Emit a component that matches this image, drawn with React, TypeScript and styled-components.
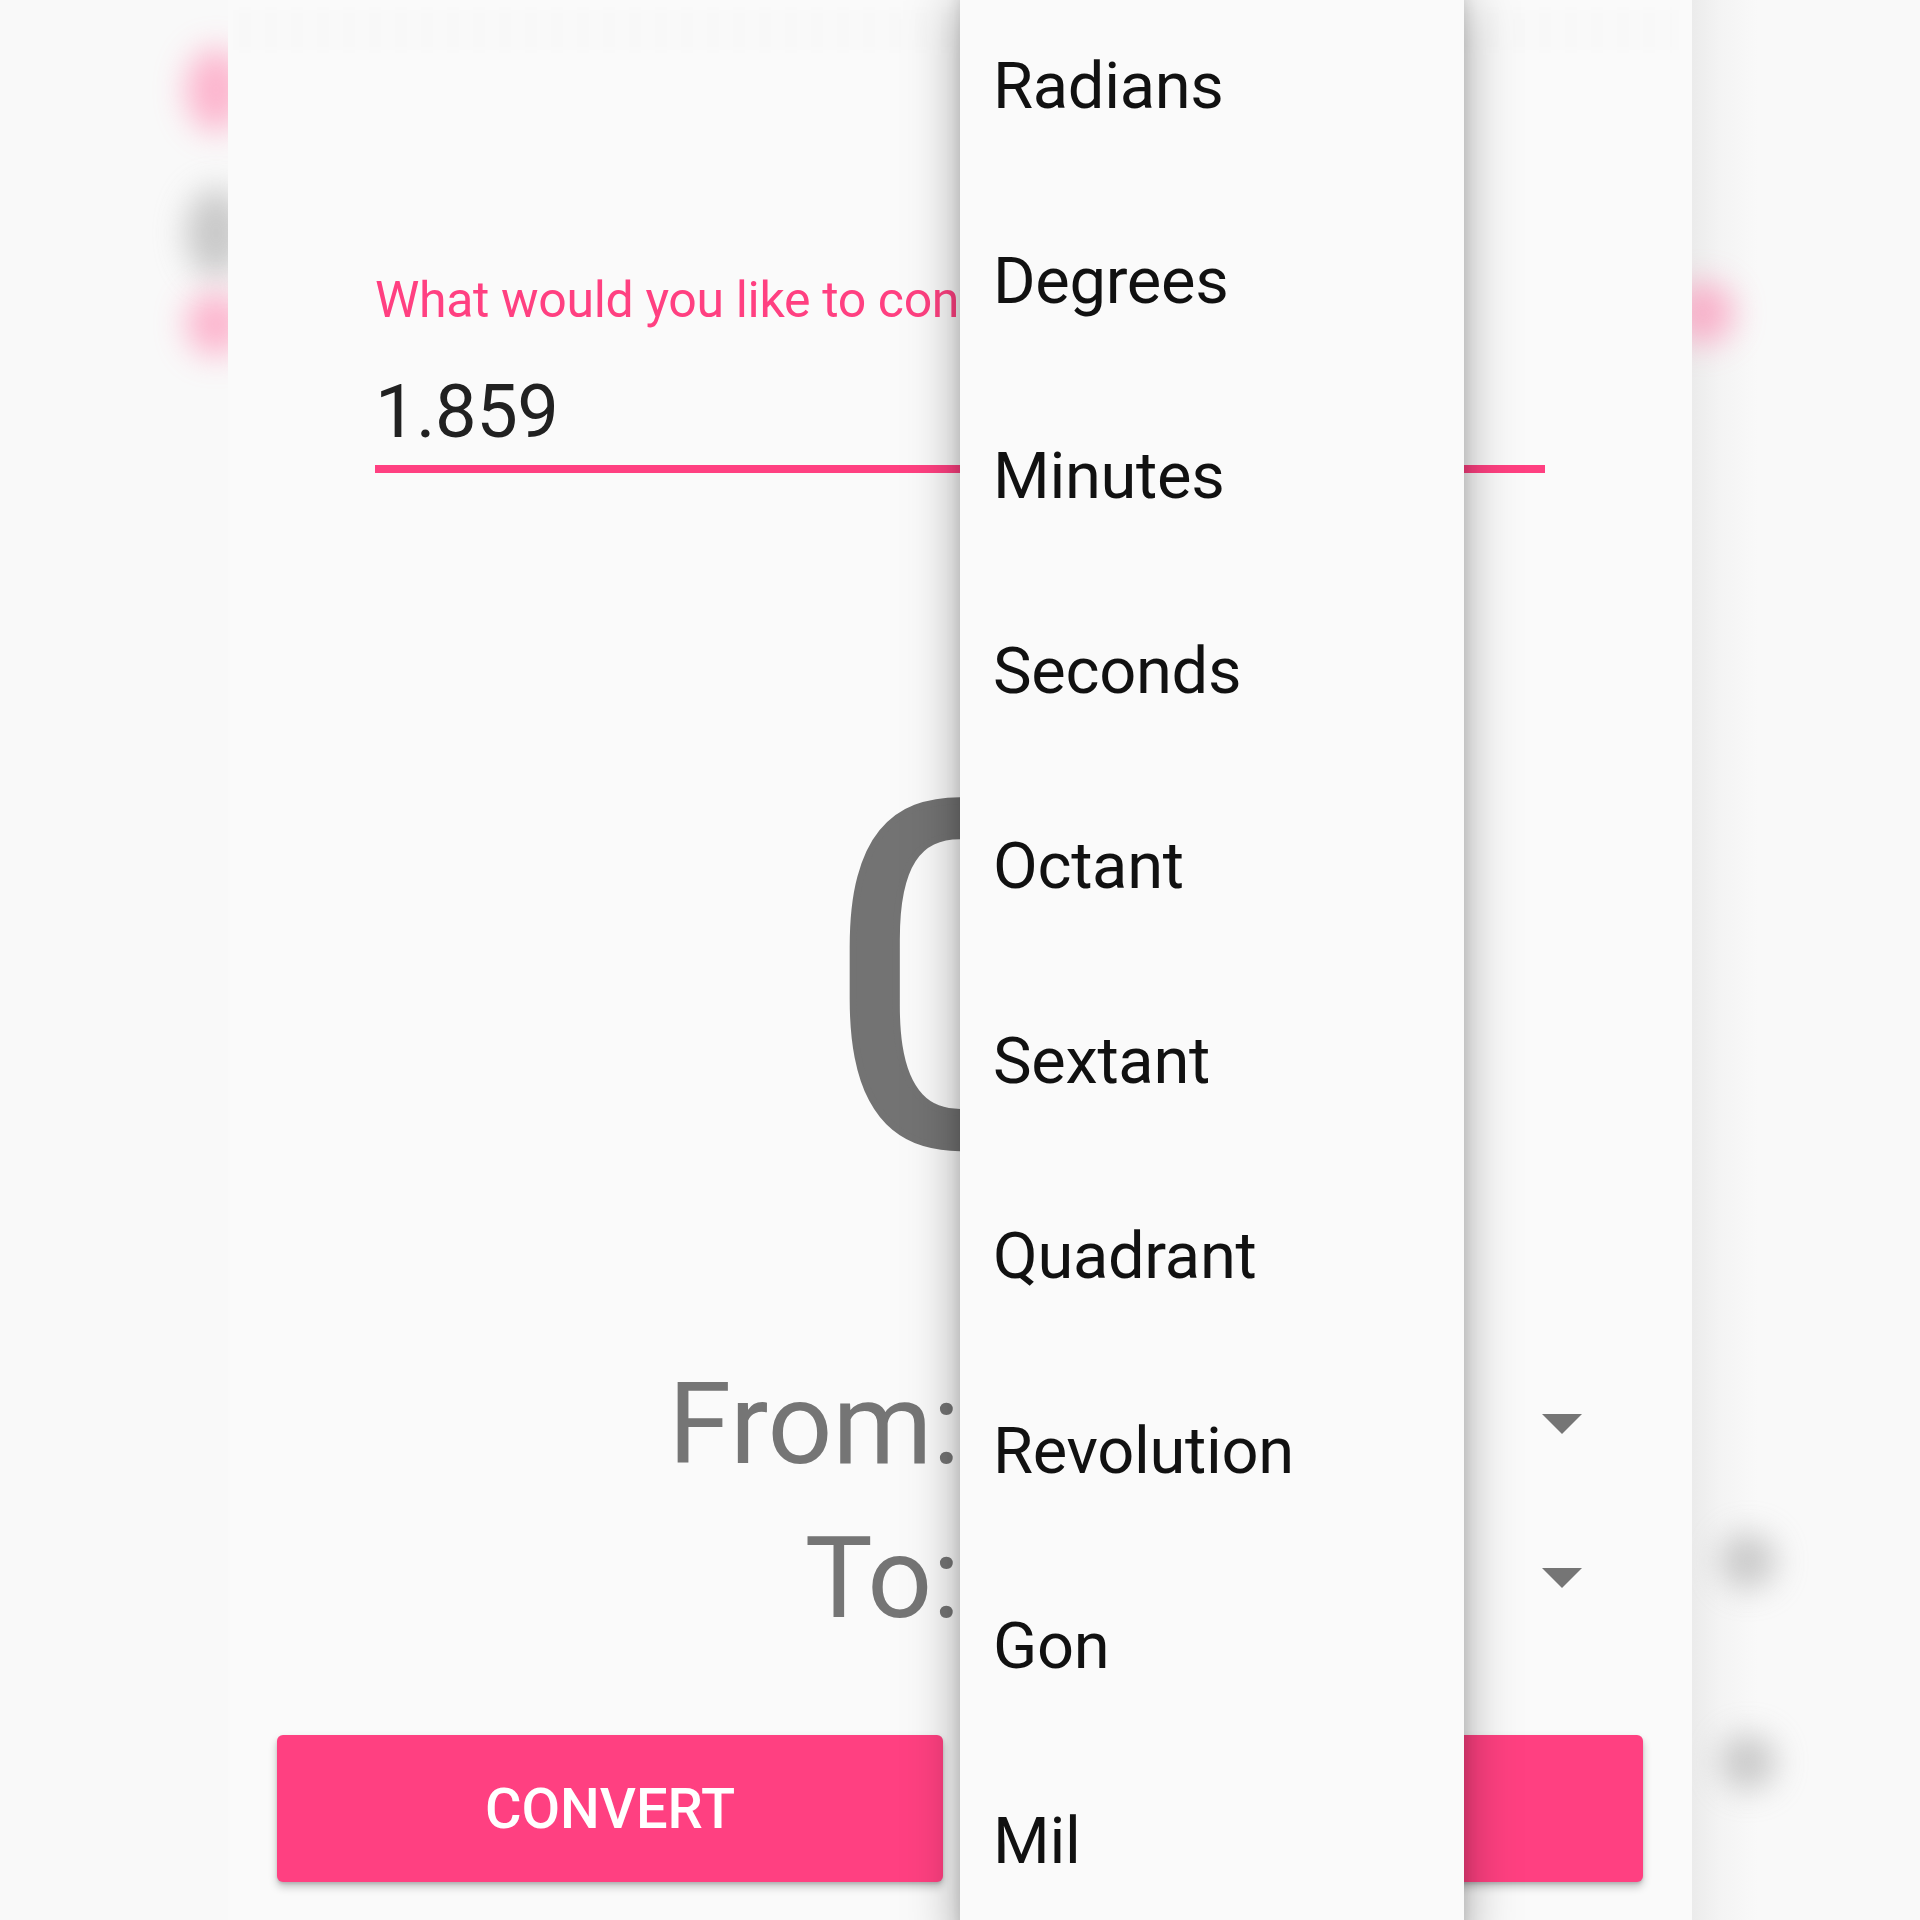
import React from "react";
import styled, { createGlobalStyle } from "styled-components";

const GlobalStyle = createGlobalStyle`
  html, body {
    margin: 0;
    padding: 0;
    background: #f9f9f9;
  }
  body {
    font-family: Roboto, "Noto Sans", "Liberation Sans", sans-serif;
  }
  * { box-sizing: border-box; }
`;

const Stage = styled.div`
  display: flex;
  width: 1920px;
  height: 1920px;
  overflow: hidden;
  background: #f9f9f9;
`;

const Gutter = styled.div<{ $side: "left" | "right" }>`
  width: 228px;
  flex: none;
  display: flex;
  flex-direction: column;
  overflow: hidden;
  padding-left: ${(p) => (p.$side === "left" ? "186px" : "0")};
  background: ${(p) =>
    p.$side === "right"
      ? "linear-gradient(to right, #ebebeb 0px, #f4f4f4 30px, #f9f9f9 66px)"
      : "#f9f9f9"};
`;

const Blob = styled.div<{ $tone: "pink" | "gray"; $w: number; $h: number; $top: number; $left?: number }>`
  flex: none;
  width: ${(p) => p.$w}px;
  height: ${(p) => p.$h}px;
  margin-top: ${(p) => p.$top}px;
  margin-left: ${(p) => p.$left ?? 0}px;
  border-radius: 50%;
  background: ${(p) => (p.$tone === "pink" ? "#ff86b0" : "#a8a8a8")};
  opacity: 0.6;
  filter: blur(16px);
`;

const Screen = styled.div`
  position: relative;
  width: 1464px;
  flex: none;
  display: flex;
  flex-direction: column;
  background: #fafafa;
`;

const GhostBar = styled.div`
  height: 60px;
  flex: none;
  display: flex;
  align-items: center;
  padding: 0 16px 0 8px;
`;

const GhostText = styled.div`
  height: 40px;
  width: 100%;
  background: repeating-linear-gradient(
    to right,
    rgba(0, 0, 0, 0.008) 0px,
    rgba(0, 0, 0, 0.008) 18px,
    rgba(0, 0, 0, 0) 18px,
    rgba(0, 0, 0, 0) 26px
  );
  filter: blur(4px);
`;

const Field = styled.div`
  margin-top: 215px;
  padding: 0 147px;
  display: flex;
  flex-direction: column;
`;

const FieldLabel = styled.div`
  font-size: 50px;
  line-height: 50px;
  height: 50px;
  letter-spacing: -0.35px;
  color: #ff4081;
  white-space: nowrap;
`;

const FieldValue = styled.div`
  margin-top: 49px;
  font-size: 74px;
  line-height: 75px;
  height: 75px;
  letter-spacing: -0.5px;
  color: #212121;
`;

const FieldLine = styled.div`
  margin-top: 16px;
  height: 8px;
  background: #ff4081;
`;

const Result = styled.div`
  margin-top: 258px;
  font-size: 475px;
  line-height: 500px;
  height: 500px;
  text-align: center;
  color: #737373;
  -webkit-text-stroke: 7px #737373;
`;

const Rows = styled.div`
  margin-top: 116px;
  display: flex;
  flex-direction: column;
`;

const SpinnerRow = styled.div`
  height: 154px;
  display: grid;
  grid-template-columns: 732px 732px;
  align-items: center;
`;

const RowLabel = styled.div`
  font-size: 114px;
  line-height: 154px;
  text-align: right;
  color: #757575;
`;

const Spinner = styled.div`
  height: 100%;
  display: flex;
  align-items: center;
  justify-content: flex-end;
  padding-right: 110px;
`;

const Caret = styled.span`
  width: 0;
  height: 0;
  border-left: 20px solid transparent;
  border-right: 20px solid transparent;
  border-top: 20px solid #757575;
`;

const ButtonRow = styled.div`
  margin-top: 80px;
  padding: 0 49px;
  display: flex;
  gap: 34px;
`;

const Button = styled.button`
  flex: 1;
  height: 147px;
  border: none;
  border-radius: 6px;
  background: #ff4081;
  color: #ffffff;
  font-family: Roboto, "Noto Sans", sans-serif;
  font-size: 56px;
  font-weight: 500;
  box-shadow: 0 5px 9px rgba(0, 0, 0, 0.22), 0 2px 3px rgba(0, 0, 0, 0.12);
  padding: 0;
`;

const Menu = styled.ul`
  position: absolute;
  top: -11px;
  left: 732px;
  width: 504px;
  margin: 0;
  padding: 0;
  list-style: none;
  background: #fafafa;
  box-shadow: 0 12px 50px rgba(0, 0, 0, 0.34), 0 4px 14px rgba(0, 0, 0, 0.12);
  z-index: 2;
`;

const MenuItem = styled.li`
  height: 195px;
  line-height: 195px;
  padding-left: 33px;
  font-size: 65px;
  letter-spacing: -0.3px;
  color: #111111;
  white-space: nowrap;
`;

const units = [
  "Radians",
  "Degrees",
  "Minutes",
  "Seconds",
  "Octant",
  "Sextant",
  "Quadrant",
  "Revolution",
  "Gon",
  "Mil",
];

export default function App() {
  return (
    <>
      <GlobalStyle />
      <Stage>
        <Gutter $side="left">
          <Blob $tone="pink" $w={60} $h={84} $top={48} />
          <Blob $tone="gray" $w={60} $h={90} $top={56} />
          <Blob $tone="pink" $w={60} $h={64} $top={14} />
        </Gutter>

        <Screen>
          <GhostBar>
            <GhostText />
          </GhostBar>

          <Field>
            <FieldLabel>What would you like to convert?</FieldLabel>
            <FieldValue>1.859</FieldValue>
            <FieldLine />
          </Field>

          <Result>0</Result>

          <Rows>
            <SpinnerRow>
              <RowLabel>From:</RowLabel>
              <Spinner>
                <Caret />
              </Spinner>
            </SpinnerRow>
            <SpinnerRow>
              <RowLabel>To:</RowLabel>
              <Spinner>
                <Caret />
              </Spinner>
            </SpinnerRow>
          </Rows>

          <ButtonRow>
            <Button>CONVERT</Button>
            <Button aria-label="swap" />
          </ButtonRow>

          <Menu>
            {units.map((u) => (
              <MenuItem key={u}>{u}</MenuItem>
            ))}
          </Menu>
        </Screen>

        <Gutter $side="right">
          <Blob $tone="pink" $w={62} $h={62} $top={282} $left={-20} />
          <Blob $tone="gray" $w={56} $h={56} $top={1189} $left={28} />
          <Blob $tone="gray" $w={56} $h={56} $top={145} $left={28} />
        </Gutter>
      </Stage>
    </>
  );
}
